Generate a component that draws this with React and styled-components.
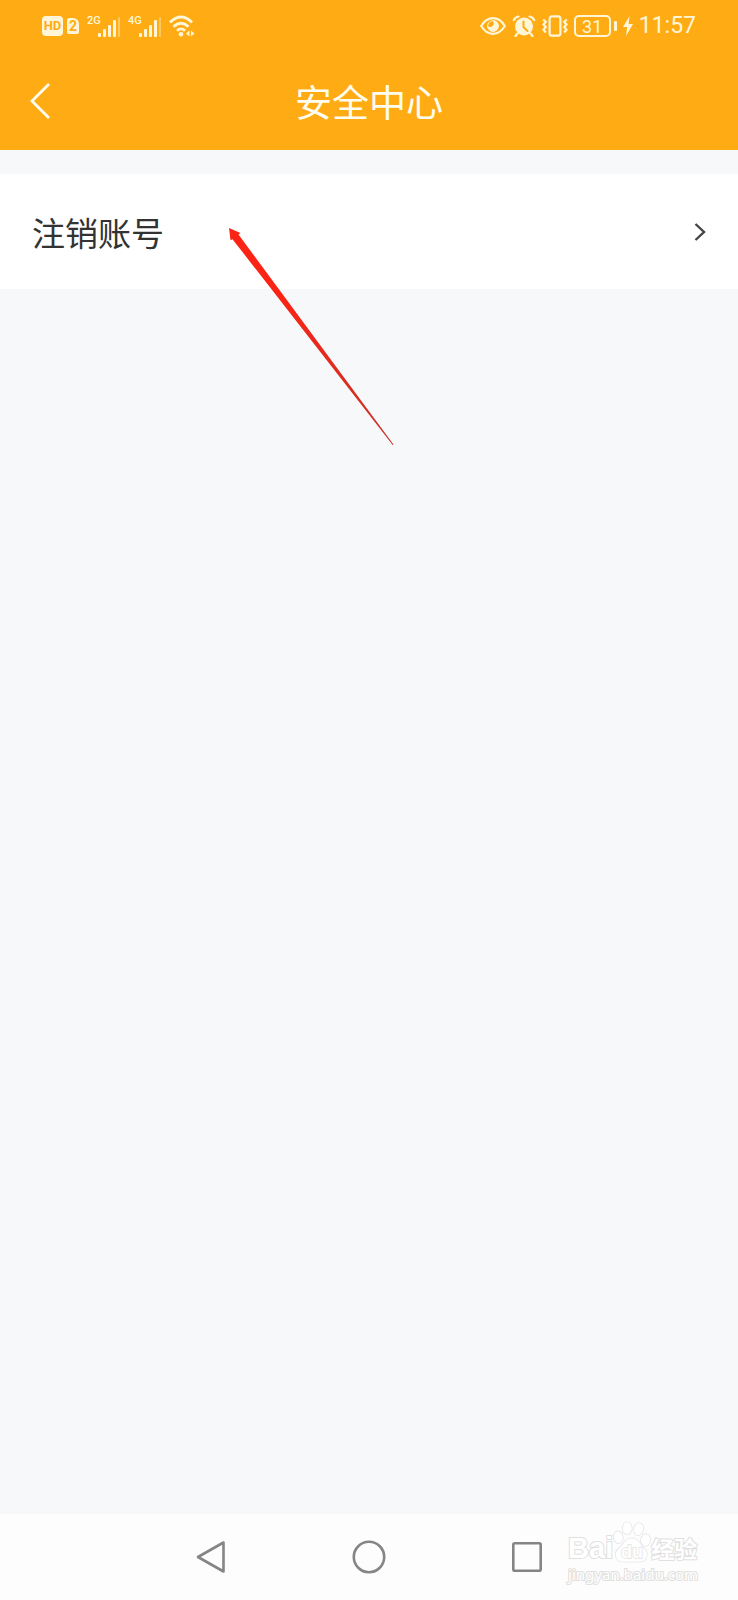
import React from 'react';
import styled, { createGlobalStyle } from 'styled-components';

const GlobalStyle = createGlobalStyle`
  * {
    box-sizing: border-box;
  }

  body {
    margin: 0;
    background: #f7f8fa;
    font-family: 'Noto Sans CJK SC', 'Noto Sans', sans-serif;
  }

  button {
    padding: 0;
    border: 0;
    background: none;
    font: inherit;
    color: inherit;
    cursor: pointer;
  }

  svg {
    display: block;
    flex: none;
  }
`;

const Page = styled.div`
  display: flex;
  flex-direction: column;
  min-height: 100vh;
`;

const Header = styled.header`
  background: #ffac14;
  color: #fffdf0;
`;

const StatusBar = styled.div`
  display: flex;
  justify-content: space-between;
  height: 52px;
  padding: 0 42px;
  color: #fff6d8;
  font-family: Roboto, sans-serif;
`;

const StatusGroup = styled.div`
  display: flex;
  align-items: center;
  gap: ${({ $gap }) => $gap}px;
`;

const SimBadges = styled.div`
  display: flex;
  align-items: center;
  gap: 4px;
`;

const Badge = styled.span`
  width: ${({ $width }) => $width}px;
  height: ${({ $height }) => $height}px;
  border-radius: ${({ $cut }) => ($cut ? '2px 6px 2px 2px' : '4px')};
  background: #fff6d8;
  color: #ffac14;
  font-size: ${({ $size }) => $size}px;
  font-weight: 700;
  line-height: ${({ $height }) => $height}px;
  text-align: center;
`;

const Signal = styled.div`
  display: flex;
  align-items: flex-start;
  height: 22px;
`;

const Network = styled.span`
  width: 11px;
  font-size: 11px;
  font-weight: 500;
  line-height: 12px;
`;

const Battery = styled.div`
  display: flex;
  align-items: center;
  gap: 3px;

  &::after {
    width: 3px;
    height: 10px;
    border-radius: 1px;
    background: #fff6d8;
    content: '';
  }
`;

const BatteryLevel = styled.span`
  width: 37px;
  height: 22px;
  border: 2px solid #fff6d8;
  border-radius: 5px;
  font-size: 18px;
  line-height: 19px;
  text-align: center;
`;

const Clock = styled.time`
  font-size: 23px;
  line-height: 28px;
`;

const TitleBar = styled.div`
  display: grid;
  grid-template-columns: 80px 1fr 80px;
  align-items: center;
  height: 98px;
`;

const BackButton = styled.button`
  display: flex;
  align-items: center;
  height: 64px;
  padding-left: 30px;
`;

const Title = styled.h1`
  margin: 0;
  font-size: 37px;
  font-weight: 400;
  line-height: 48px;
  text-align: center;
`;

const Content = styled.main`
  position: relative;
  flex: 1;
  padding-top: 24px;
`;

const Row = styled.button`
  display: flex;
  align-items: center;
  justify-content: space-between;
  width: 100%;
  height: 115px;
  padding: 0 32px;
  background: #fff;
  color: #333;
  font-size: 33px;
  line-height: 48px;
`;

// lies over the row and the empty area under it
const Pointer = styled.svg`
  position: absolute;
  top: 78px;
  left: 229px;
  pointer-events: none;
`;

const NavBar = styled.nav`
  position: relative;
  display: flex;
  align-items: center;
  justify-content: center;
  gap: 110px;
  height: 86px;
  background: #fdfdfd;
  color: #858585;
`;

const NavButton = styled.button`
  display: flex;
  align-items: center;
  justify-content: center;
  width: 48px;
  height: 48px;
`;

const Watermark = styled.div`
  position: absolute;
  right: 40px;
  bottom: 16px;
  color: #fff;
  font-family: 'Liberation Sans', 'Noto Sans CJK SC', sans-serif;
  -webkit-text-stroke: 2px #e0e0e0;
  paint-order: stroke fill;
`;

const Brand = styled.div`
  display: flex;
  align-items: flex-end;
  height: 46px;
  font-size: 29px;
  font-weight: 700;
  line-height: 32px;
`;

const BrandCn = styled.span`
  font-family: 'Noto Sans CJK SC', sans-serif;
  font-size: 23px;
`;

const Site = styled.div`
  font-family: 'Noto Sans', sans-serif;
  font-size: 15px;
  line-height: 20px;
`;

const SignalBars = () => (
  <svg width="22" height="22" viewBox="0 0 22 22" fill="currentColor">
    <rect x="0" y="18" width="3" height="4" rx="1" />
    <rect x="5" y="14" width="3" height="8" rx="1" />
    <rect x="10" y="10" width="3" height="12" rx="1" />
    <rect x="15" y="5" width="3" height="17" rx="1" />
    <rect x="20" y="2" width="2" height="20" rx="1" opacity="0.4" />
  </svg>
);

const WifiIcon = () => (
  <svg width="26" height="22" viewBox="0 0 26 22" fill="none" stroke="currentColor" strokeWidth="2.8">
    <path d="M1 7.5Q12 -3.5 23 7.5M4.5 11.8Q12 4.5 19.5 11.8M8 15.8Q12 12 16 15.8" />
    <circle cx="12" cy="19.3" r="2.3" fill="currentColor" stroke="none" />
    <path d="M20.5 15.5v6L17 18.5zM22 15.5v6l3.5-3z" fill="currentColor" stroke="none" />
  </svg>
);

const EyeIcon = () => (
  <svg width="26" height="18" viewBox="0 0 26 18" fill="none" stroke="currentColor">
    <path d="M1.2 9Q6 1.2 13 1.2T24.8 9Q20 16.8 13 16.8T1.2 9z" strokeWidth="2.2" />
    <path d="M13 3.5a5.5 5.5 0 1 1-5.5 5.5q3 2 5 0t.5-5.5z" fill="currentColor" stroke="none" />
    <circle cx="13" cy="9" r="5.4" strokeWidth="1" />
  </svg>
);

const AlarmIcon = () => (
  <svg width="24" height="22" viewBox="0 0 24 22" fill="none" stroke="currentColor" strokeLinecap="round">
    <circle cx="12" cy="11.5" r="9" fill="currentColor" stroke="none" />
    <path d="M1.8 5.2Q3 2 6.5 1.5M17.5 1.5Q21 2 22.2 5.2M5.5 18.5L3.5 21M18.5 18.5l2 2.5" strokeWidth="2.2" />
    <path d="M11.5 6.5V12l4 4" stroke="#ffac14" strokeWidth="2" />
  </svg>
);

const VibrateIcon = () => (
  <svg width="26" height="22" viewBox="0 0 26 22" fill="none" stroke="currentColor" strokeWidth="2.2">
    <rect x="7.6" y="1.3" width="10.8" height="19.4" rx="2.4" />
    <path d="M1.2 4.5l2.6 2.3-2.3 2.7 2.3 2.6-2.3 2.7 2.3 2.7M24.8 4.5l-2.6 2.3 2.3 2.7-2.3 2.6 2.3 2.7-2.3 2.7" />
  </svg>
);

const BoltIcon = () => (
  <svg width="10" height="20" viewBox="0 0 10 20" fill="currentColor">
    <path d="M6.5 0L0 11h4.2L3 20l7-12H5.6z" />
  </svg>
);

const PawIcon = () => (
  <svg width="38" height="44" viewBox="0 0 40 44" fill="#fff" stroke="#e0e0e0" strokeWidth="1.4">
    <ellipse cx="5.5" cy="17" rx="4.8" ry="6.2" transform="rotate(-10 5.5 17)" />
    <ellipse cx="15" cy="7.5" rx="4.8" ry="6.5" />
    <ellipse cx="27" cy="8.5" rx="4.8" ry="6.5" transform="rotate(12 27 8.5)" />
    <ellipse cx="34.3" cy="20" rx="4.8" ry="6.2" transform="rotate(10 34.3 20)" />
    <path d="M20 18c6 0 8 6 12 10 4 3 5 8 2 12-3 4-8 2.5-14 2.5S9 44 5 41c-3-4-3-9 1-12 5-4 7-11 14-11z" />
    <text x="20" y="39" textAnchor="middle" fontSize="19">
      du
    </text>
  </svg>
);

const App = () => (
  <Page>
    <GlobalStyle />
    <Header>
      <StatusBar>
        <StatusGroup $gap={8}>
          <SimBadges>
            <Badge $width={21} $height={20} $size={13}>HD</Badge>
            <Badge $width={12} $height={16} $size={14} $cut>2</Badge>
          </SimBadges>
          <Signal>
            <Network>2G</Network>
            <SignalBars />
          </Signal>
          <Signal>
            <Network>4G</Network>
            <SignalBars />
          </Signal>
          <WifiIcon />
        </StatusGroup>
        <StatusGroup $gap={6}>
          <EyeIcon />
          <AlarmIcon />
          <VibrateIcon />
          <Battery>
            <BatteryLevel>31</BatteryLevel>
          </Battery>
          <BoltIcon />
          <Clock>11:57</Clock>
        </StatusGroup>
      </StatusBar>
      <TitleBar>
        <BackButton aria-label="返回">
          <svg width="22" height="36" viewBox="0 0 22 36" fill="none" stroke="currentColor" strokeWidth="2.8">
            <path d="M19 1L2 18l17 17" />
          </svg>
        </BackButton>
        <Title>安全中心</Title>
      </TitleBar>
    </Header>
    <Content>
      <Row>
        注销账号
        <svg width="12" height="20" viewBox="0 0 12 20" fill="none" stroke="#444" strokeWidth="2.4">
          <path d="M1.5 2L10 10l-8.5 8" />
        </svg>
      </Row>
      <Pointer width="165" height="218" viewBox="0 0 165 218">
        <defs>
          <linearGradient id="pointer" x1="0" y1="0" x2="1" y2="1">
            <stop offset="0.3" stopColor="#fb2414" />
            <stop offset="1" stopColor="#c4322a" />
          </linearGradient>
        </defs>
        <path d="M0 0l11.5 5-2 1.5L164.5 216.5l-.8.5L3.5 11.2l-2 1z" fill="url(#pointer)" />
      </Pointer>
    </Content>
    <NavBar>
      <NavButton aria-label="后退">
        <svg width="30" height="34" viewBox="0 0 30 34" fill="none" stroke="currentColor" strokeWidth="2.6" strokeLinejoin="round">
          <path d="M27.5 2.5v29L2 17z" />
        </svg>
      </NavButton>
      <NavButton aria-label="主页">
        <svg width="34" height="34" viewBox="0 0 34 34" fill="none" stroke="currentColor" strokeWidth="2.6">
          <circle cx="17" cy="17" r="15.2" />
        </svg>
      </NavButton>
      <NavButton aria-label="最近任务">
        <svg width="30" height="30" viewBox="0 0 30 30" fill="none" stroke="currentColor" strokeWidth="2.6">
          <rect x="1.3" y="1.3" width="27.4" height="27.4" rx="1.5" />
        </svg>
      </NavButton>
      <Watermark>
        <Brand>
          Bai
          <PawIcon />
          <BrandCn>经验</BrandCn>
        </Brand>
        <Site>jingyan.baidu.com</Site>
      </Watermark>
    </NavBar>
  </Page>
);

export default App;
